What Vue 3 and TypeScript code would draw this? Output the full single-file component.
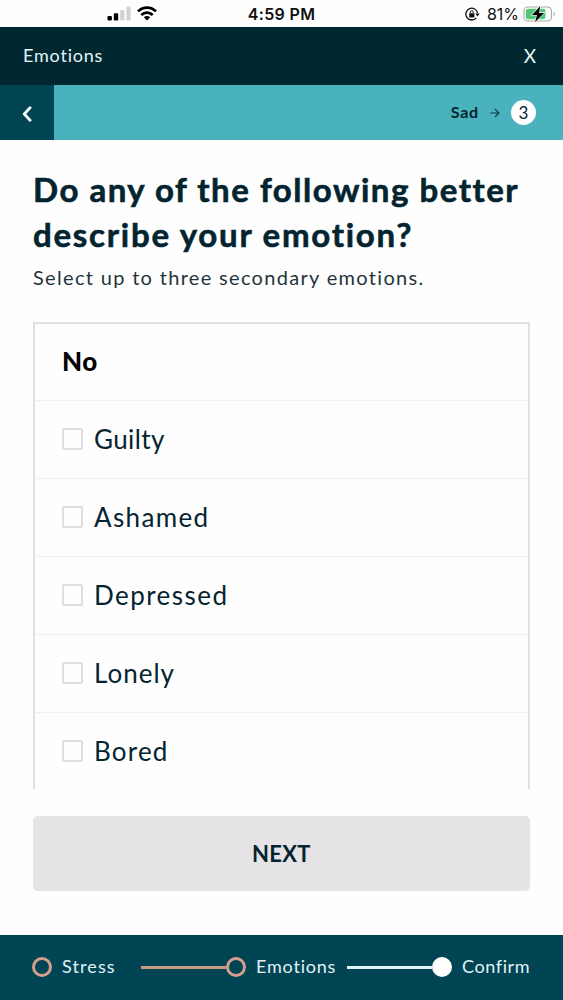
<script setup lang="ts">
import { ref } from 'vue'

interface Emotion {
  id: string
  label: string
}

const emotions: Emotion[] = [
  { id: 'guilty', label: 'Guilty' },
  { id: 'ashamed', label: 'Ashamed' },
  { id: 'depressed', label: 'Depressed' },
  { id: 'lonely', label: 'Lonely' },
  { id: 'bored', label: 'Bored' },
]

const selected = ref<string[]>([])
const maxSelected = 3

function toggle(id: string): void {
  if (selected.value.includes(id)) {
    selected.value = selected.value.filter((item) => item !== id)
  } else if (selected.value.length < maxSelected) {
    selected.value = [...selected.value, id]
  }
}
</script>

<template>
  <div class="screen">
    <div class="status">
      <div class="status-left">
        <svg class="signal" width="24" height="15" viewBox="0 0 24 15">
          <rect x="0.5" y="9.9" width="4.4" height="4.6" rx="1.2" fill="#000" />
          <rect x="6.8" y="7.3" width="4.4" height="7.2" rx="1.2" fill="#000" />
          <rect x="13.2" y="4" width="4.2" height="10.5" rx="1.2" fill="#d2d0d2" />
          <rect x="19.4" y="0.6" width="4.2" height="13.9" rx="1.2" fill="#d2d0d2" />
        </svg>
        <svg class="wifi" width="20" height="15" viewBox="0 0 20 15">
          <g fill="none" stroke="#000" stroke-width="2.7">
            <path d="M1 5.4C6 .3 14 .3 19 5.4" />
            <path d="M4.3 9C7.5 5.8 12.5 5.8 15.7 9" />
          </g>
          <path d="M6.8 11.3C8.6 9.7 11.4 9.7 13.2 11.3L10 14.6Z" fill="#000" />
        </svg>
      </div>
      <div class="clock">4:59 PM</div>
      <div class="status-right">
        <svg class="lock" width="15" height="14" viewBox="0 0 15 14">
          <path d="M11.3 10.9A5.9 5.9 0 1 1 12.6 6.2" fill="none" stroke="#111" stroke-width="1.3" />
          <path d="M10.3 6.4H14.6L12.5 9.4Z" fill="#111" />
          <rect x="4.2" y="6.2" width="5.2" height="4.2" rx=".7" fill="#111" />
          <path d="M5.3 6.5V5.2a1.5 1.5 0 0 1 3 0v1.3" fill="none" stroke="#111" stroke-width="1" />
        </svg>
        <span class="percent">81%</span>
        <svg class="battery" width="34" height="18" viewBox="0 0 34 18">
          <rect x="1" y="2" width="27.5" height="14" rx="4" fill="#fff" stroke="#a5aaa6" stroke-width="1.1" />
          <rect x="2.8" y="3.8" width="19.6" height="10.4" rx="2.3" fill="#4fc878" />
          <path d="M30.6 6.8c1.6.6 1.6 3.8 0 4.4Z" fill="#a5aaa6" />
          <path d="M17.4 1L9 10H14L12 17.2L21 7.9H16Z" fill="#000" stroke="#fff" stroke-width="1.2" paint-order="stroke" />
        </svg>
      </div>
    </div>

    <header class="header">
      <span class="header-title">Emotions</span>
      <span class="close">X</span>
    </header>

    <div class="crumbs">
      <button class="back" aria-label="Back">
        <svg width="10" height="16" viewBox="0 0 10 16">
          <path d="M8.1 1.8L2.2 8L8.1 14.2" fill="none" stroke="#fff" stroke-width="2.7" stroke-linecap="round" stroke-linejoin="round" />
        </svg>
      </button>
      <div class="trail">
        <span class="mood">Sad</span>
        <svg class="arrow" width="10" height="10" viewBox="0 0 10 10">
          <path d="M.3 5H9M5 1L9 5L5 9" fill="none" stroke="#123d49" stroke-width="1.1" />
        </svg>
        <span class="count">3</span>
      </div>
    </div>

    <main class="content">
      <h1 class="title">
        <span class="title-a">Do any of the following better</span><br />
        <span class="title-b">describe your emotion?</span>
      </h1>
      <p class="subtitle">Select up to three secondary emotions.</p>

      <div class="list">
        <div class="row none"><span class="text">No</span></div>
        <div v-for="e in emotions" :key="e.id" class="row" @click="toggle(e.id)">
          <span class="box" :class="{ checked: selected.includes(e.id) }"></span>
          <span :class="['text', 'label', e.id]">{{ e.label }}</span>
        </div>
      </div>

      <button class="next"><span>NEXT</span></button>
    </main>

    <footer class="steps">
      <span class="dot"></span>
      <span class="step stress">Stress</span>
      <span class="line"></span>
      <span class="dot"></span>
      <span class="step middle">Emotions</span>
      <span class="line current"></span>
      <span class="dot current"></span>
      <span class="step confirm">Confirm</span>
    </footer>
  </div>
</template>

<style>
body {
  margin: 0;
  background: #fefefe;
}
</style>

<style scoped>
.screen {
  width: 563px;
  height: 1000px;
  display: flex;
  flex-direction: column;
  overflow: hidden;
  background: #fefefe;
  color: #04242f;
  font-family: Lato, "Open Sans", sans-serif;
  white-space: nowrap;
}
button {
  border: 0;
  padding: 0;
  font: inherit;
  color: inherit;
}
.status {
  height: 27px;
  flex: none;
  display: grid;
  grid-template-columns: 1fr auto 1fr;
  align-items: center;
  font-family: Inter, sans-serif;
  color: #111;
}
.status-left {
  display: flex;
  gap: 6px;
  padding: 0 0 1px 107px;
}
.clock {
  font-size: 16px;
  font-weight: 600;
  letter-spacing: 0.35px;
  line-height: 27px;
  padding-top: 1px;
}
.status-right {
  display: flex;
  align-items: center;
  justify-content: flex-end;
  padding-right: 6px;
}
.percent {
  margin: 0 4px 0 7px;
  font-size: 16px;
  line-height: 26px;
}
.header {
  height: 58px;
  flex: none;
  display: flex;
  align-items: center;
  justify-content: space-between;
  box-sizing: border-box;
  padding: 0 27px 2px 23px;
  background: #012730;
  color: #e2f5f8;
  font-size: 18px;
}
.header-title {
  letter-spacing: 0.8px;
}
.close {
  font-size: 19px;
}
.crumbs {
  height: 55px;
  flex: none;
  display: flex;
  background: #49b2bc;
}
.back {
  width: 54px;
  display: flex;
  align-items: center;
  justify-content: center;
  background: #014454;
  padding-top: 2px;
}
.trail {
  flex: 1;
  display: flex;
  align-items: center;
  justify-content: flex-end;
  padding-right: 27px;
}
.mood {
  padding-bottom: 2px;
  font-size: 16px;
  font-weight: 700;
  letter-spacing: 0.8px;
}
.arrow {
  margin: 1px 11px 0 11px;
}
.count {
  width: 25px;
  height: 25px;
  border-radius: 50%;
  background: #fff;
  font-size: 17px;
  line-height: 25px;
  text-align: center;
}
.content {
  height: 795px;
  flex: none;
  box-sizing: border-box;
  padding: 27px 33px 0;
}
.title {
  margin: 0;
  font-size: 33px;
  font-weight: 700;
  line-height: 44.5px;
  -webkit-text-stroke: 0.6px currentColor;
}
.title-a {
  letter-spacing: 1.52px;
}
.title-b {
  letter-spacing: 1.75px;
}
.subtitle {
  margin: 6px 0 0;
  font-size: 20px;
  line-height: 30px;
  letter-spacing: 1.32px;
  color: #24343b;
}
.list {
  height: 467px;
  margin-top: 30px;
  box-sizing: border-box;
  overflow: hidden;
  border: 2px solid #e0dfe1;
  border-bottom: 0;
}
.row {
  height: 78px;
  box-sizing: border-box;
  display: flex;
  align-items: center;
  padding-left: 27px;
  border-bottom: 1px solid #f0f0f1;
  font-size: 26px;
}
.row:last-child {
  border-bottom-color: transparent;
}
.none {
  height: 77px;
  font-weight: 900;
  color: #000;
}
.none .text {
  letter-spacing: 0.5px;
}
.text {
  padding-bottom: 2px;
}
.box {
  width: 21px;
  height: 22px;
  box-sizing: border-box;
  margin: 0 11px 1px 0;
  border: 2px solid #dfdddf;
  border-radius: 2px;
}
.box.checked {
  background: #49b2bc;
}
.label {
  letter-spacing: 1px;
}
.guilty {
  letter-spacing: 0.4px;
}
.ashamed {
  letter-spacing: 1.35px;
}
.depressed {
  letter-spacing: 1.45px;
}
.bored {
  letter-spacing: 1.2px;
}
.next {
  display: flex;
  align-items: center;
  justify-content: center;
  width: 497px;
  height: 75px;
  margin-top: 27px;
  border-radius: 5px;
  background: #e5e3e5;
  font-size: 22px;
  font-weight: 700;
  letter-spacing: 0.3px;
}
.steps {
  height: 65px;
  flex: none;
  box-sizing: border-box;
  display: flex;
  align-items: center;
  padding: 0 0 1px 32px;
  background: #014454;
  color: #e0f3f6;
  font-size: 18px;
}
.dot {
  flex: none;
  width: 20px;
  height: 20px;
  box-sizing: border-box;
  border: 3px solid #d4a08e;
  border-radius: 50%;
}
.dot.current {
  border-color: #fff;
  background: #fff;
}
.step {
  flex: none;
  letter-spacing: 0.8px;
  margin-left: 10px;
  padding-bottom: 2px;
}
.stress {
  width: 79px;
  letter-spacing: 1.1px;
}
.middle {
  width: 91px;
}
.confirm {
  letter-spacing: 0.6px;
}
.line {
  flex: none;
  width: 85px;
  height: 3px;
  background: #c99a86;
}
.line.current {
  background: #e0f5f7;
}
</style>
